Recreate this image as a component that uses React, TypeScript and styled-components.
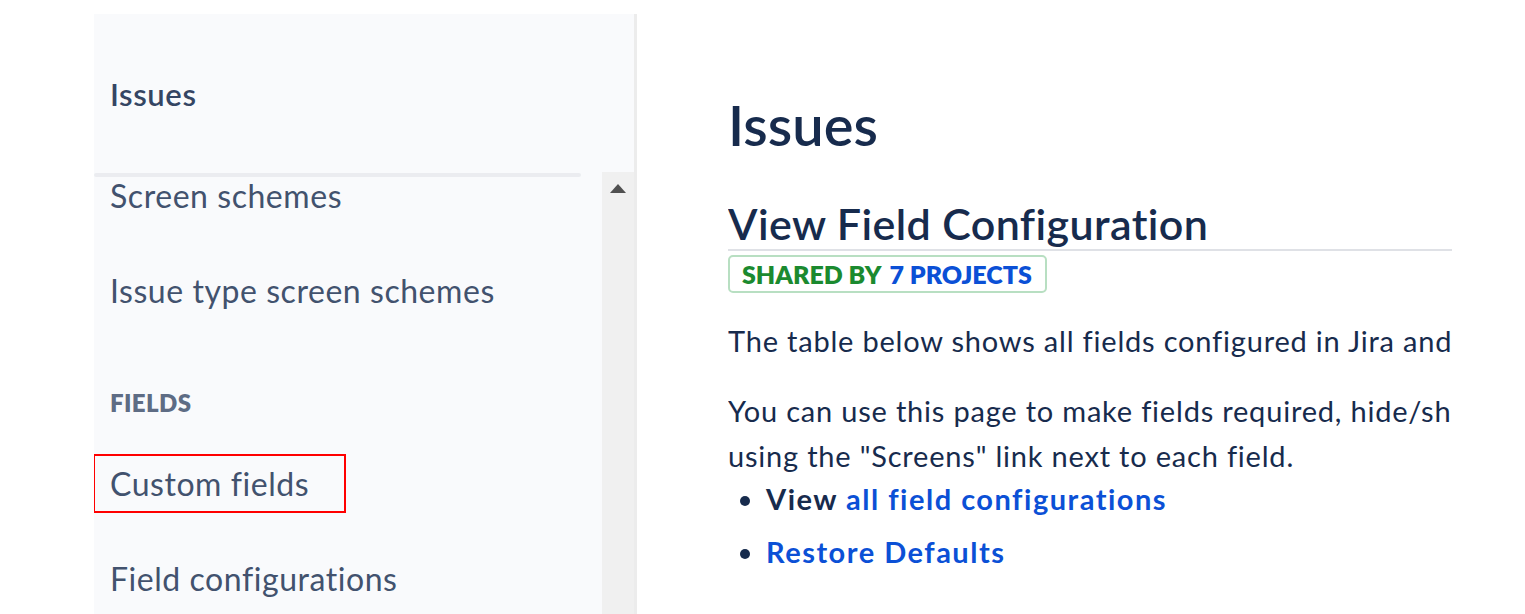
import React from "react";
import styled, { createGlobalStyle } from "styled-components";

const Global = createGlobalStyle`
  html, body { margin: 0; padding: 0; background: #ffffff; }
  body { font-family: Lato, "Noto Sans", sans-serif; }
  * { box-sizing: border-box; }
`;

const Page = styled.div`
  display: flex;
  height: 614px;
  padding: 14px 0 0 94px;
  overflow: hidden;
  background: #ffffff;
`;

const Sidebar = styled.aside`
  width: 543px;
  flex: 0 0 543px;
  display: flex;
  flex-direction: column;
  background: #f9fafc;
  border-right: 3px solid #ececec;
`;

const SidebarHeader = styled.div`
  height: 158px;
  flex: 0 0 158px;
  padding: 61px 0 0 16px;
  font-size: 31px;
  letter-spacing: 0.6px;
  line-height: 38px;
  font-weight: 600;
  color: #344563;
`;

const ScrollArea = styled.div`
  flex: 1;
  display: flex;
  min-height: 0;
`;

const NavList = styled.div`
  flex: 1;
  display: flex;
  flex-direction: column;
  overflow: hidden;
  position: relative;
`;

const ScrollShadow = styled.div`
  position: absolute;
  top: 1px;
  left: 0;
  width: 487px;
  height: 4px;
  border-radius: 2px;
  background: #ebecf0;
  z-index: 1;
`;

const NavItem = styled.div<{ $highlight?: boolean; $first?: boolean }>`
  flex: 0 0 auto;
  height: 59px;
  display: flex;
  align-items: center;
  padding-left: ${(p) => (p.$highlight ? "15px" : "16px")};
  margin-left: ${(p) => (p.$highlight ? "-1px" : "0")};
  margin-top: ${(p) => (p.$first ? "-6px" : "0")};
  margin-bottom: 36px;
  width: ${(p) => (p.$highlight ? "253px" : "auto")};
  border: ${(p) => (p.$highlight ? "2px solid #ff0000" : "none")};
  font-size: 32px;
  letter-spacing: 0.55px;
  color: #42526e;
  white-space: nowrap;
`;

const SectionTitle = styled.div`
  flex: 0 0 auto;
  height: 30px;
  line-height: 30px;
  margin: 32px 0 36px 0;
  padding-left: 16px;
  font-size: 24px;
  letter-spacing: 0.4px;
  font-weight: 800;
  color: #5e6c84;
  text-transform: uppercase;
`;

const Scrollbar = styled.div`
  width: 32px;
  flex: 0 0 32px;
  background: #f0f0f0;
  display: flex;
  justify-content: center;
  padding-top: 12px;
`;

const Main = styled.main`
  flex: 1;
  padding: 0 0 0 91px;
  overflow: hidden;
`;

const Content = styled.div`
  width: 724px;
  overflow: hidden;
  color: #172b4d;
`;

const PageTitle = styled.h1`
  margin: 82px 0 0 0;
  font-size: 56px;
  line-height: 58px;
  font-weight: 600;
  color: #172b4d;
  white-space: nowrap;
`;

const SectionHeading = styled.h2`
  margin: 45px 0 0 0;
  font-size: 43px;
  letter-spacing: 0.4px;
  line-height: 50px;
  font-weight: 600;
  color: #172b4d;
  padding-bottom: 0;
  border-bottom: 2px solid #dfe1e6;
  white-space: nowrap;
`;

const Badge = styled.div`
  display: inline-flex;
  gap: 8px;
  margin-top: 4px;
  height: 38px;
  align-items: center;
  padding: 0 13px 0 12px;
  border: 2px solid #b8dfc2;
  border-radius: 5px;
  font-size: 25px;
  font-weight: 800;
  white-space: nowrap;
`;

const BadgePart = styled.span<{ $tone: "green" | "blue" }>`
  color: ${(p) => (p.$tone === "green" ? "#1b8a2f" : "#0b50d6")};
`;

const Paragraph = styled.p<{ $top: number }>`
  margin: ${(p) => p.$top}px 0 0 0;
  font-size: 29px;
  letter-spacing: 0.8px;
  line-height: 45px;
  white-space: nowrap;
`;

const Line = styled.span`
  display: block;
`;

const List = styled.ul`
  margin: -2px 0 0 0;
  padding: 0 0 0 38px;
  font-size: 29px;
  font-weight: 700;
  letter-spacing: 1.5px;
  line-height: 45px;
`;

const ListItem = styled.li`
  margin-bottom: 8px;
  white-space: nowrap;
  &::marker { color: #172b4d; }
`;

const Strong = styled.span`
  color: #172b4d;
`;

const Link = styled.a`
  color: #0b50d6;
  text-decoration: none;
`;

export default function App() {
  return (
    <>
      <Global />
      <Page>
        <Sidebar>
          <SidebarHeader>Issues</SidebarHeader>
          <ScrollArea>
            <NavList>
              <ScrollShadow />
              <NavItem $first>Screen schemes</NavItem>
              <NavItem>Issue type screen schemes</NavItem>
              <SectionTitle>Fields</SectionTitle>
              <NavItem $highlight>Custom fields</NavItem>
              <NavItem>Field configurations</NavItem>
            </NavList>
            <Scrollbar>
              <svg width="16" height="9" viewBox="0 0 16 9">
                <path d="M0 9 L8 0 L16 9 Z" fill="#505050" />
              </svg>
            </Scrollbar>
          </ScrollArea>
        </Sidebar>
        <Main>
          <Content>
            <PageTitle>Issues</PageTitle>
            <SectionHeading>View Field Configuration</SectionHeading>
            <Badge>
              <BadgePart $tone="green">SHARED BY</BadgePart>
              <BadgePart $tone="blue">7 PROJECTS</BadgePart>
            </Badge>
            <Paragraph $top={25}>
              The table below shows all fields configured in Jira and
            </Paragraph>
            <Paragraph $top={25}>
              <Line>You can use this page to make fields required, hide/show</Line>
              <Line>using the "Screens" link next to each field.</Line>
            </Paragraph>
            <List>
              <ListItem>
                <Strong>View </Strong>
                <Link href="#">all field configurations</Link>
              </ListItem>
              <ListItem>
                <Link href="#">Restore Defaults</Link>
              </ListItem>
            </List>
          </Content>
        </Main>
      </Page>
    </>
  );
}
